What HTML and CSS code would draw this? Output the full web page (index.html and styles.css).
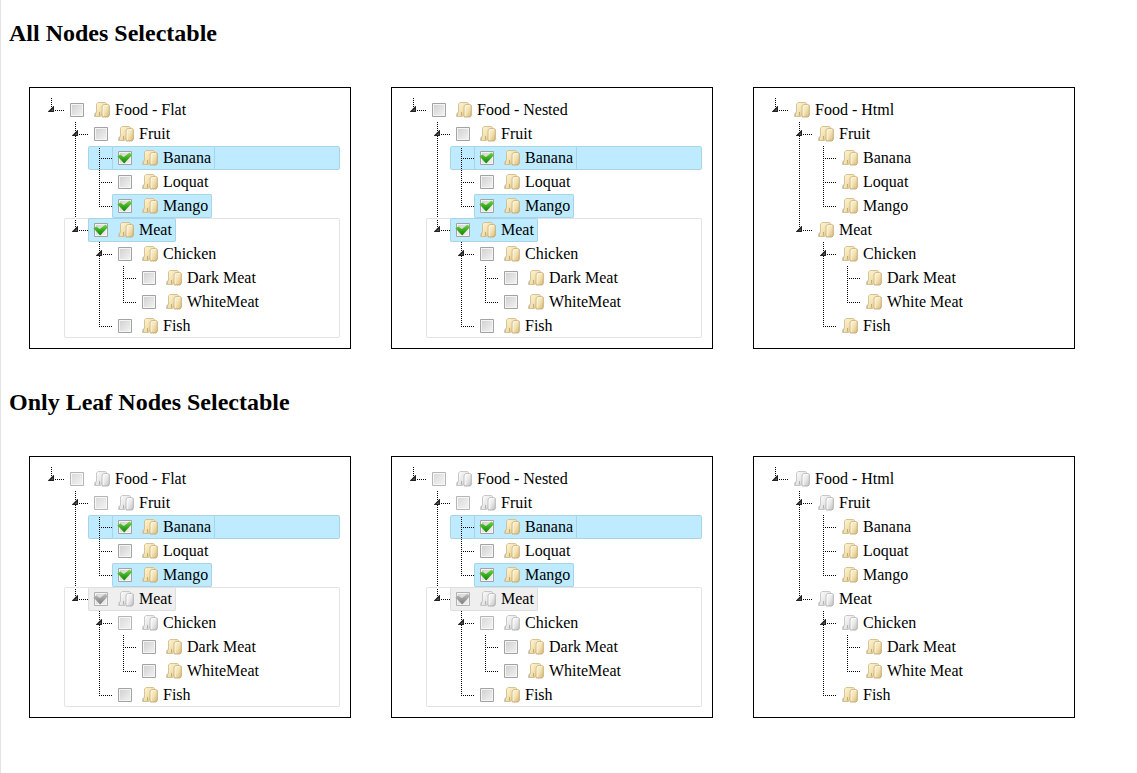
FILE: index.html
```html
<!DOCTYPE html>
<html lang="en">
<head>
<meta charset="utf-8">
<title>Tree selection</title>
<link rel="stylesheet" href="styles.css">
</head>
<body>
<h2>All Nodes Selectable</h2>
<div class="panels">
  <ul class="tree">
    <li><div class="row"><button class="toggle" aria-label="Toggle Food"></button><label class="node"><input type="checkbox"><i class="folder"></i>Food - Flat</label></div>
      <ul>
        <li><div class="row"><button class="toggle" aria-label="Toggle Fruit"></button><label class="node"><input type="checkbox"><i class="folder"></i>Fruit</label></div>
          <ul>
            <li class="active"><div class="row"><span class="joint"></span><label class="node selected"><input type="checkbox" checked><i class="folder"></i>Banana</label></div></li>
            <li><div class="row"><span class="joint"></span><label class="node"><input type="checkbox"><i class="folder"></i>Loquat</label></div></li>
            <li><div class="row"><span class="joint"></span><label class="node selected"><input type="checkbox" checked><i class="folder"></i>Mango</label></div></li>
          </ul>
        </li>
        <li class="outlined"><div class="row"><button class="toggle" aria-label="Toggle Meat"></button><label class="node selected"><input type="checkbox" checked><i class="folder"></i>Meat</label></div>
          <ul>
            <li><div class="row"><button class="toggle" aria-label="Toggle Chicken"></button><label class="node"><input type="checkbox"><i class="folder"></i>Chicken</label></div>
              <ul>
                <li><div class="row"><span class="joint"></span><label class="node"><input type="checkbox"><i class="folder"></i>Dark Meat</label></div></li>
                <li><div class="row"><span class="joint"></span><label class="node"><input type="checkbox"><i class="folder"></i>WhiteMeat</label></div></li>
              </ul>
            </li>
            <li><div class="row"><span class="joint"></span><label class="node"><input type="checkbox"><i class="folder"></i>Fish</label></div></li>
          </ul>
        </li>
      </ul>
    </li>
  </ul>
  <ul class="tree">
    <li><div class="row"><button class="toggle" aria-label="Toggle Food"></button><label class="node"><input type="checkbox"><i class="folder"></i>Food - Nested</label></div>
      <ul>
        <li><div class="row"><button class="toggle" aria-label="Toggle Fruit"></button><label class="node"><input type="checkbox"><i class="folder"></i>Fruit</label></div>
          <ul>
            <li class="active"><div class="row"><span class="joint"></span><label class="node selected"><input type="checkbox" checked><i class="folder"></i>Banana</label></div></li>
            <li><div class="row"><span class="joint"></span><label class="node"><input type="checkbox"><i class="folder"></i>Loquat</label></div></li>
            <li><div class="row"><span class="joint"></span><label class="node selected"><input type="checkbox" checked><i class="folder"></i>Mango</label></div></li>
          </ul>
        </li>
        <li class="outlined"><div class="row"><button class="toggle" aria-label="Toggle Meat"></button><label class="node selected"><input type="checkbox" checked><i class="folder"></i>Meat</label></div>
          <ul>
            <li><div class="row"><button class="toggle" aria-label="Toggle Chicken"></button><label class="node"><input type="checkbox"><i class="folder"></i>Chicken</label></div>
              <ul>
                <li><div class="row"><span class="joint"></span><label class="node"><input type="checkbox"><i class="folder"></i>Dark Meat</label></div></li>
                <li><div class="row"><span class="joint"></span><label class="node"><input type="checkbox"><i class="folder"></i>WhiteMeat</label></div></li>
              </ul>
            </li>
            <li><div class="row"><span class="joint"></span><label class="node"><input type="checkbox"><i class="folder"></i>Fish</label></div></li>
          </ul>
        </li>
      </ul>
    </li>
  </ul>
  <ul class="tree">
    <li><div class="row"><button class="toggle" aria-label="Toggle Food"></button><span class="node"><i class="folder"></i>Food - Html</span></div>
      <ul>
        <li><div class="row"><button class="toggle" aria-label="Toggle Fruit"></button><span class="node"><i class="folder"></i>Fruit</span></div>
          <ul>
            <li><div class="row"><span class="joint"></span><span class="node"><i class="folder"></i>Banana</span></div></li>
            <li><div class="row"><span class="joint"></span><span class="node"><i class="folder"></i>Loquat</span></div></li>
            <li><div class="row"><span class="joint"></span><span class="node"><i class="folder"></i>Mango</span></div></li>
          </ul>
        </li>
        <li><div class="row"><button class="toggle" aria-label="Toggle Meat"></button><span class="node"><i class="folder"></i>Meat</span></div>
          <ul>
            <li><div class="row"><button class="toggle" aria-label="Toggle Chicken"></button><span class="node"><i class="folder"></i>Chicken</span></div>
              <ul>
                <li><div class="row"><span class="joint"></span><span class="node"><i class="folder"></i>Dark Meat</span></div></li>
                <li><div class="row"><span class="joint"></span><span class="node"><i class="folder"></i>White Meat</span></div></li>
              </ul>
            </li>
            <li><div class="row"><span class="joint"></span><span class="node"><i class="folder"></i>Fish</span></div></li>
          </ul>
        </li>
      </ul>
    </li>
  </ul>
</div>
<h2>Only Leaf Nodes Selectable</h2>
<div class="panels">
  <ul class="tree">
    <li><div class="row"><button class="toggle" aria-label="Toggle Food"></button><label class="node"><input type="checkbox" disabled><i class="folder muted"></i>Food - Flat</label></div>
      <ul>
        <li><div class="row"><button class="toggle" aria-label="Toggle Fruit"></button><label class="node"><input type="checkbox" disabled><i class="folder muted"></i>Fruit</label></div>
          <ul>
            <li class="active"><div class="row"><span class="joint"></span><label class="node selected"><input type="checkbox" checked><i class="folder"></i>Banana</label></div></li>
            <li><div class="row"><span class="joint"></span><label class="node"><input type="checkbox"><i class="folder"></i>Loquat</label></div></li>
            <li><div class="row"><span class="joint"></span><label class="node selected"><input type="checkbox" checked><i class="folder"></i>Mango</label></div></li>
          </ul>
        </li>
        <li class="outlined"><div class="row"><button class="toggle" aria-label="Toggle Meat"></button><label class="node locked"><input type="checkbox" checked disabled><i class="folder muted"></i>Meat</label></div>
          <ul>
            <li><div class="row"><button class="toggle" aria-label="Toggle Chicken"></button><label class="node"><input type="checkbox" disabled><i class="folder muted"></i>Chicken</label></div>
              <ul>
                <li><div class="row"><span class="joint"></span><label class="node"><input type="checkbox"><i class="folder"></i>Dark Meat</label></div></li>
                <li><div class="row"><span class="joint"></span><label class="node"><input type="checkbox"><i class="folder"></i>WhiteMeat</label></div></li>
              </ul>
            </li>
            <li><div class="row"><span class="joint"></span><label class="node"><input type="checkbox"><i class="folder"></i>Fish</label></div></li>
          </ul>
        </li>
      </ul>
    </li>
  </ul>
  <ul class="tree">
    <li><div class="row"><button class="toggle" aria-label="Toggle Food"></button><label class="node"><input type="checkbox" disabled><i class="folder muted"></i>Food - Nested</label></div>
      <ul>
        <li><div class="row"><button class="toggle" aria-label="Toggle Fruit"></button><label class="node"><input type="checkbox" disabled><i class="folder muted"></i>Fruit</label></div>
          <ul>
            <li class="active"><div class="row"><span class="joint"></span><label class="node selected"><input type="checkbox" checked><i class="folder"></i>Banana</label></div></li>
            <li><div class="row"><span class="joint"></span><label class="node"><input type="checkbox"><i class="folder"></i>Loquat</label></div></li>
            <li><div class="row"><span class="joint"></span><label class="node selected"><input type="checkbox" checked><i class="folder"></i>Mango</label></div></li>
          </ul>
        </li>
        <li class="outlined"><div class="row"><button class="toggle" aria-label="Toggle Meat"></button><label class="node locked"><input type="checkbox" checked disabled><i class="folder muted"></i>Meat</label></div>
          <ul>
            <li><div class="row"><button class="toggle" aria-label="Toggle Chicken"></button><label class="node"><input type="checkbox" disabled><i class="folder muted"></i>Chicken</label></div>
              <ul>
                <li><div class="row"><span class="joint"></span><label class="node"><input type="checkbox"><i class="folder"></i>Dark Meat</label></div></li>
                <li><div class="row"><span class="joint"></span><label class="node"><input type="checkbox"><i class="folder"></i>WhiteMeat</label></div></li>
              </ul>
            </li>
            <li><div class="row"><span class="joint"></span><label class="node"><input type="checkbox"><i class="folder"></i>Fish</label></div></li>
          </ul>
        </li>
      </ul>
    </li>
  </ul>
  <ul class="tree">
    <li><div class="row"><button class="toggle" aria-label="Toggle Food"></button><span class="node"><i class="folder muted"></i>Food - Html</span></div>
      <ul>
        <li><div class="row"><button class="toggle" aria-label="Toggle Fruit"></button><span class="node"><i class="folder muted"></i>Fruit</span></div>
          <ul>
            <li><div class="row"><span class="joint"></span><span class="node"><i class="folder"></i>Banana</span></div></li>
            <li><div class="row"><span class="joint"></span><span class="node"><i class="folder"></i>Loquat</span></div></li>
            <li><div class="row"><span class="joint"></span><span class="node"><i class="folder"></i>Mango</span></div></li>
          </ul>
        </li>
        <li><div class="row"><button class="toggle" aria-label="Toggle Meat"></button><span class="node"><i class="folder muted"></i>Meat</span></div>
          <ul>
            <li><div class="row"><button class="toggle" aria-label="Toggle Chicken"></button><span class="node"><i class="folder muted"></i>Chicken</span></div>
              <ul>
                <li><div class="row"><span class="joint"></span><span class="node"><i class="folder"></i>Dark Meat</span></div></li>
                <li><div class="row"><span class="joint"></span><span class="node"><i class="folder"></i>White Meat</span></div></li>
              </ul>
            </li>
            <li><div class="row"><span class="joint"></span><span class="node"><i class="folder"></i>Fish</span></div></li>
          </ul>
        </li>
      </ul>
    </li>
  </ul>
</div>
</body>
</html>
```
FILE: styles.css
```css
* {
  box-sizing: border-box;
}

html {
  min-height: 100%;
  border-left: 1px solid #e3e3e3;
  background: #fff;
}

body {
  margin: 0 8px;
  padding-top: 20px;
  font: 16px/24px "Liberation Serif", "Times New Roman", serif;
  color: #000;
}

h2 {
  margin: 0;
  font-size: 24px;
  line-height: 27px;
}

.panels {
  display: flex;
  flex-wrap: wrap;
  gap: 40px;
  padding: 40px 20px;
}

ul {
  margin: 0;
  padding: 0;
  list-style: none;
}

.tree {
  flex: 0 0 322px;
  padding: 10px;
  border: 1px solid #000;
}

.tree ul {
  padding-left: 24px;
}

/* Vertical connector: full height between siblings, half a row on the last */
li {
  border-radius: 2px;
  background: repeating-linear-gradient(#000 0 1px, transparent 1px 2px) 11px 0 / 1px 100% no-repeat;
}

li:last-child {
  background-size: 1px 13px;
}

li.active {
  background-color: #beebff;
  box-shadow: inset 0 0 0 1px #a9d3e6;
}

li.outlined {
  box-shadow: inset 0 0 0 1px #e3e3e3;
}

.row {
  display: flex;
  height: 24px;
}

/* Horizontal connector */
.joint,
.toggle {
  flex: none;
  width: 24px;
  height: 24px;
  padding: 0;
  border: 0;
  background: repeating-linear-gradient(90deg, #000 0 1px, transparent 1px 2px) 11px 12px / 13px 1px no-repeat;
}

.toggle {
  background-image:
    url("data:image/svg+xml,%3Csvg xmlns='http://www.w3.org/2000/svg' width='6' height='6'%3E%3Cpath d='M6 0V6H0V5.5L5.5 0Z' fill='%23222'/%3E%3Cpath d='M5 2.5V5H2.5Z' fill='%23555'/%3E%3C/svg%3E"),
    repeating-linear-gradient(90deg, #000 0 1px, transparent 1px 2px);
  background-position: 8px 8px, 15px 12px;
  background-size: 6px 6px, 9px 1px;
}

.node {
  display: flex;
  align-items: center;
  padding: 0 4px 0 6px;
  border-radius: 2px;
  white-space: nowrap;
}

label.node {
  padding-left: 5px;
}

.node.selected {
  background: #beebff;
  box-shadow: inset 0 0 0 1px #a9d3e6;
}

.node.locked {
  background: #efefef;
  box-shadow: inset 0 0 0 1px #dedede;
}

/* The tick reaches past the 14px box, so the control is 16px wide */
.node input {
  appearance: none;
  flex: none;
  width: 16px;
  height: 16px;
  margin: 0 9px 0 0;
  background: url("data:image/svg+xml,%3Csvg xmlns='http://www.w3.org/2000/svg' viewBox='0 0 16 16'%3E%3Cdefs%3E%3ClinearGradient id='b' x2='1' y2='1'%3E%3Cstop stop-color='%23d2d2d2'/%3E%3Cstop offset='1' stop-color='%23f0f0f0'/%3E%3C/linearGradient%3E%3C/defs%3E%3Cpath d='M1.5 1.5H14.5V14.5H1.5Z' fill='%23f4f4f4' stroke='%23a3a3a3'/%3E%3Cpath d='M3 3H13V13H3Z' fill='url(%23b)'/%3E%3C/svg%3E") center / 16px 16px no-repeat;
}

.node input:checked {
  background-image: url("data:image/svg+xml,%3Csvg xmlns='http://www.w3.org/2000/svg' viewBox='0 0 16 16'%3E%3Cdefs%3E%3ClinearGradient id='b' x2='1' y2='1'%3E%3Cstop stop-color='%23d2d2d2'/%3E%3Cstop offset='1' stop-color='%23f0f0f0'/%3E%3C/linearGradient%3E%3ClinearGradient id='g' x2='0' y2='1'%3E%3Cstop stop-color='%2377d84f'/%3E%3Cstop offset='.5' stop-color='%2337ad1c'/%3E%3Cstop offset='1' stop-color='%23148306'/%3E%3C/linearGradient%3E%3C/defs%3E%3Cpath d='M1.5 1.5H14.5V14.5H1.5Z' fill='%23f4f4f4' stroke='%23a3a3a3'/%3E%3Cpath d='M3 3H13V13H3Z' fill='url(%23b)'/%3E%3Cpath d='M.4 6.3L3.2 4.4L6.8 7L12.6 2.6L15 5L7.2 13.4Z' fill='url(%23g)'/%3E%3C/svg%3E");
}

.node input:disabled {
  opacity: .8;
}

.node input:checked:disabled {
  filter: grayscale(1);
}

.folder {
  flex: none;
  width: 16px;
  height: 16px;
  margin-right: 5px;
  background: url("data:image/svg+xml,%3Csvg xmlns='http://www.w3.org/2000/svg' viewBox='0 0 16 16'%3E%3Cdefs%3E%3ClinearGradient id='a' x2='1' y2='1'%3E%3Cstop stop-color='%23fff6da'/%3E%3Cstop offset='.5' stop-color='%23f2e2b2'/%3E%3Cstop offset='1' stop-color='%23d5b876'/%3E%3C/linearGradient%3E%3C/defs%3E%3Cpath d='M0 12L2 10V15H0Z' fill='%23ccc'/%3E%3Cpath d='M2.5 2L4 .5H11.5L12.5 1.5V13H7.5L6.5 14.5H1.5V12L2.5 10Z' fill='url(%23a)' stroke='%23cfb67d' stroke-width='.8'/%3E%3Cpath d='M5.5 10V13.5' stroke='%23b6965a' stroke-width='.7' fill='none'/%3E%3Cpath d='M8.2 4L9.5 2.8H14.6L15.3 3.5V13.5L14 15H8.2Z' fill='url(%23a)' stroke='%23c0a064' stroke-width='.8'/%3E%3Cpath d='M9 14V4.4L10 3.6H14' stroke='%23fffae8' fill='none' stroke-width='.8'/%3E%3C/svg%3E") center / 16px 16px no-repeat;
}

.folder.muted {
  filter: grayscale(1) brightness(1.03);
}
```
